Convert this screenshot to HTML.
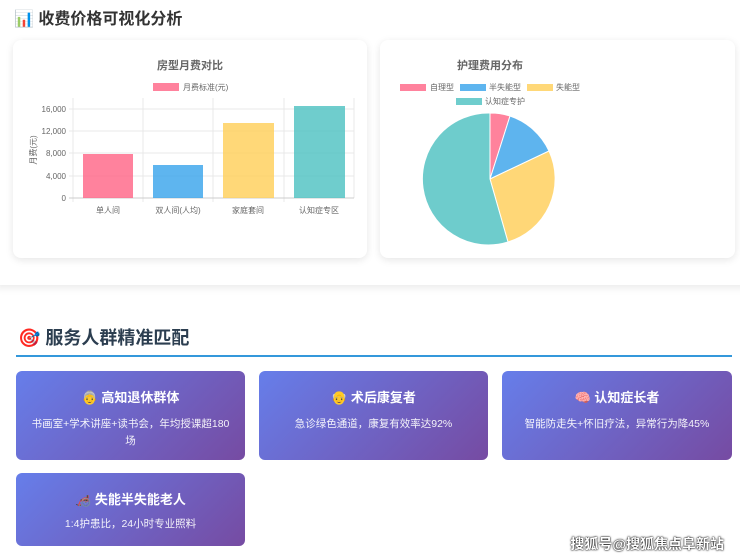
<!DOCTYPE html>
<html><head><meta charset="utf-8"><style>
*{margin:0;padding:0;box-sizing:border-box}
body{width:740px;height:560px;overflow:hidden;background:#fff;font-family:"Liberation Sans","Noto Sans CJK SC",sans-serif;position:relative}
.h1{position:absolute;left:14px;top:5px;font-size:16px;font-weight:bold;color:#333}
.outer{position:absolute;left:-10px;top:-20px;width:770px;height:305px;border-radius:10px;box-shadow:0 3px 8px rgba(0,0,0,.08);background:#fff}
.card{position:absolute;top:40px;height:218px;background:#fff;border-radius:8px;box-shadow:0 2px 8px rgba(0,0,0,.1)}
.t{position:absolute;width:100%;text-align:center;font-size:11px;font-weight:bold;color:#666}
.h2{position:absolute;left:18px;top:324px;font-size:18px;font-weight:bold;color:#2c3e50}
.line{position:absolute;left:16px;top:355px;width:716px;height:2px;background:#3498db}
.g{position:absolute;border-radius:6px;background:linear-gradient(135deg,#667eea,#764ba2);color:#fff;text-align:center}
.g b{display:block;font-size:13px;margin-top:16px}
.g p{font-size:10.5px;line-height:17px;margin:10px 12px 0;opacity:.92}
.wm{position:absolute;right:16px;top:534px;font-size:14px;color:#fff;font-weight:bold;text-shadow:0 0 2px #000,0 0 1px #000}
</style></head><body>
<div class="outer"></div>
<div class="h1">📊 收费价格可视化分析</div>
<div class="card" style="left:13px;width:354px">
<div class="t" style="top:17px">房型月费对比</div>
</div>
<div class="card" style="left:380px;width:355px">
<div class="t" style="top:17px;width:220px">护理费用分布</div>
</div>
<svg style="position:absolute;left:0;top:0" width="740" height="300" font-family="Liberation Sans,Noto Sans CJK SC,sans-serif">
<rect x="153" y="83" width="26" height="8" fill="#ff6384" opacity=".8"/>
<text x="183" y="90" font-size="8" fill="#666">月费标准(元)</text>
<g stroke="#e8e8e8" stroke-width="1">
<line x1="73" y1="98" x2="73" y2="202"/><line x1="143" y1="98" x2="143" y2="202"/><line x1="213" y1="98" x2="213" y2="202"/><line x1="284" y1="98" x2="284" y2="202"/><line x1="354" y1="98" x2="354" y2="198"/>
<line x1="69" y1="109" x2="354" y2="109"/><line x1="69" y1="131" x2="354" y2="131"/><line x1="69" y1="153" x2="354" y2="153"/><line x1="69" y1="176" x2="354" y2="176"/><line x1="69" y1="198" x2="354" y2="198" stroke="#ccc"/>
</g>
<g font-size="8" fill="#666" text-anchor="end">
<text x="66" y="112">16,000</text><text x="66" y="134">12,000</text><text x="66" y="156">8,000</text><text x="66" y="179">4,000</text><text x="66" y="201">0</text>
</g>
<text transform="translate(36,150) rotate(-90)" font-size="8" fill="#666" text-anchor="middle">月费(元)</text>
<rect x="83" y="154" width="50" height="44" fill="#ff6384" opacity=".8"/>
<rect x="153" y="165" width="50" height="33" fill="#36a2eb" opacity=".8"/>
<rect x="223" y="123" width="51" height="75" fill="#ffce56" opacity=".8"/>
<rect x="294" y="106" width="51" height="92" fill="#4bc0c0" opacity=".8"/>
<g font-size="8" fill="#666" text-anchor="middle">
<text x="108" y="213">单人间</text><text x="178" y="213">双人间(人均)</text><text x="248" y="213">家庭套间</text><text x="319" y="213">认知症专区</text>
</g>
<g font-size="8" fill="#666">
<rect x="400" y="84" width="26" height="7" fill="#ff6384" opacity=".8"/><text x="430" y="90">自理型</text>
<rect x="460" y="84" width="26" height="7" fill="#36a2eb" opacity=".8"/><text x="489" y="90">半失能型</text>
<rect x="527" y="84" width="26" height="7" fill="#ffce56" opacity=".8"/><text x="556" y="90">失能型</text>
<rect x="456" y="98" width="26" height="7" fill="#4bc0c0" opacity=".8"/><text x="485" y="104">认知症专护</text>
</g>
<g stroke="#fff" stroke-width="1">
<path d="M490 179 L490 113 A66 66 0 0 1 510 116 Z" fill="#ff6384" opacity=".8"/>
<path d="M490 179 L510 116 A66 66 0 0 1 549 151 Z" fill="#36a2eb" opacity=".8"/>
<path d="M490 179 L549 151 A66 66 0 0 1 508 242 Z" fill="#ffce56" opacity=".8"/>
<path d="M490 179 L508 242 A66 66 0 1 1 490 113 Z" fill="#4bc0c0" opacity=".8"/>
</g>
</svg>
<div class="h2">🎯 服务人群精准匹配</div>
<div class="line"></div>
<div class="g" style="left:16px;top:371px;width:229px;height:89px"><b>👵 高知退休群体</b><p>书画室+学术讲座+读书会，年均授课超180场</p></div>
<div class="g" style="left:259px;top:371px;width:229px;height:89px"><b>👴 术后康复者</b><p>急诊绿色通道，康复有效率达92%</p></div>
<div class="g" style="left:502px;top:371px;width:230px;height:89px"><b>🧠 认知症长者</b><p>智能防走失+怀旧疗法，异常行为降45%</p></div>
<div class="g" style="left:16px;top:473px;width:229px;height:73px"><b>🦽 失能半失能老人</b><p style="margin-top:8px">1:4护患比，24小时专业照料</p></div>
<div class="wm">搜狐号@搜狐焦点阜新站</div>
</body></html>
